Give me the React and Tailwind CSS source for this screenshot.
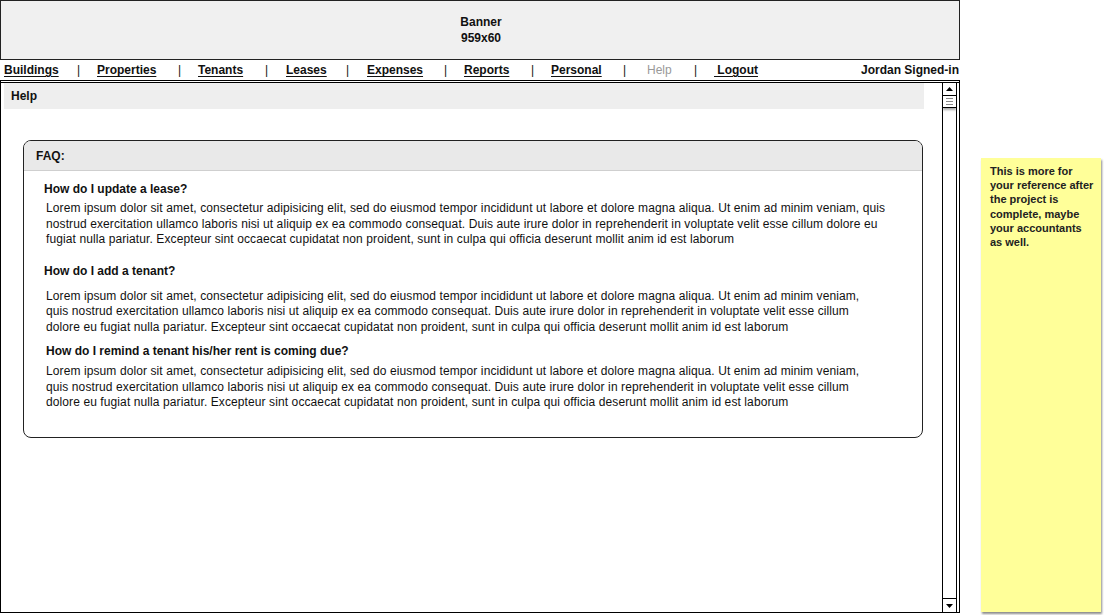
import React from "react";

const LOREM =
  "Lorem ipsum dolor sit amet, consectetur adipisicing elit, sed do eiusmod tempor incididunt ut labore et dolore magna aliqua. Ut enim ad minim veniam, quis nostrud exercitation ullamco laboris nisi ut aliquip ex ea commodo consequat. Duis aute irure dolor in reprehenderit in voluptate velit esse cillum dolore eu fugiat nulla pariatur. Excepteur sint occaecat cupidatat non proident, sunt in culpa qui officia deserunt mollit anim id est laborum";

function NavLink({ w, children, gray }) {
  return (
    <span className={`${w} shrink-0 whitespace-pre ${gray ? "text-[#999999] font-normal" : "font-bold underline underline-offset-2"}`}>
      {children}
    </span>
  );
}

function Sep({ w }) {
  return <span className={`${w} shrink-0 font-normal`}>|</span>;
}

export default function App() {
  return (
    <div
      className="flex w-[1104px] h-[615px] bg-white text-[#111] overflow-hidden"
      style={{ fontFamily: '"Liberation Sans", Arial, sans-serif' }}
    >
      <div className="w-[960px] shrink-0 flex flex-col">
        {/* Banner */}
        <div className="h-[60px] border border-[#222] bg-[#f0f0f0] flex flex-col items-center justify-center text-[12px] leading-[16px] font-bold pl-[2px]">
          <div>Banner</div>
          <div>959x60</div>
        </div>
        {/* Nav */}
        <div className="h-[20px] flex items-center pl-[4px] pr-[1px] text-[12px] leading-[14px]">
          <NavLink w="w-[73px]">Buildings</NavLink>
          <Sep w="w-[20px]" />
          <NavLink w="w-[81px]">Properties</NavLink>
          <Sep w="w-[20px]" />
          <NavLink w="w-[67px]">Tenants</NavLink>
          <Sep w="w-[21px]" />
          <NavLink w="w-[60px]">Leases</NavLink>
          <Sep w="w-[21px]" />
          <NavLink w="w-[77px]">Expenses</NavLink>
          <Sep w="w-[20px]" />
          <NavLink w="w-[67px]">Reports</NavLink>
          <Sep w="w-[20px]" />
          <NavLink w="w-[72px]">Personal</NavLink>
          <Sep w="w-[24px]" />
          <NavLink w="w-[47px]" gray>Help</NavLink>
          <Sep w="w-[20px]" />
          <NavLink w="w-auto">{" Logout"}</NavLink>
          <span className="ml-auto font-bold">Jordan Signed-in</span>
        </div>
        {/* Panel */}
        <div className="h-[533px] border border-black flex flex-col">
          <div className="mt-[1px] border-t border-black flex-1 flex min-h-0">
            <div className="w-[941px] flex flex-col">
              <div className="ml-[3px] w-[920px] h-[26px] bg-[#eeeeee] flex items-center pl-[7px] text-[12px] font-bold">
                Help
              </div>
              <div className="ml-[22px] mt-[31px] w-[900px] h-[298px] border border-[#222] rounded-[8px] overflow-hidden flex flex-col">
                <div className="h-[30px] shrink-0 bg-[#e9e9e9] border-b border-[#cfcfcf] flex items-center pl-[12px] text-[12px] font-bold">
                  FAQ:
                </div>
                <div className="pt-[11px] text-[12px]">
                  <div className="pl-[20px] font-bold leading-[15px]">How do I update a lease?</div>
                  <p className="pl-[22px] mt-[4px] w-[870px] leading-[15.5px] tracking-[0.1px]">{LOREM}</p>
                  <div className="pl-[20px] mt-[16px] font-bold leading-[15px]">How do I add a tenant?</div>
                  <p className="pl-[22px] mt-[10px] w-[842px] leading-[15.5px] tracking-[0.1px]">{LOREM}</p>
                  <div className="pl-[22px] mt-[9px] font-bold leading-[15px]">
                    How do I remind a tenant his/her rent is coming due?
                  </div>
                  <p className="pl-[22px] mt-[5px] w-[842px] leading-[15.5px] tracking-[0.1px]">{LOREM}</p>
                </div>
              </div>
            </div>
            {/* Scrollbar */}
            <div className="w-[15px] border-x border-black flex flex-col">
              <div className="h-[13px] border-b border-black flex items-center justify-center">
                <svg width="7" height="4" viewBox="0 0 7 4">
                  <path d="M3.5 0 L7 4 L0 4 Z" fill="#000" />
                </svg>
              </div>
              <div className="h-[12px] border-b border-black flex flex-col items-center justify-center gap-[2px] shadow-[0_2px_2px_rgba(0,0,0,0.35)]">
                <div className="w-[7px] h-px bg-[#888]" />
                <div className="w-[7px] h-px bg-[#888]" />
                <div className="w-[7px] h-px bg-[#888]" />
              </div>
              <div className="flex-1" />
              <div className="h-[14px] border-t border-black flex items-center justify-center">
                <svg width="7" height="4" viewBox="0 0 7 4">
                  <path d="M0 0 L7 0 L3.5 4 Z" fill="#000" />
                </svg>
              </div>
            </div>
            <div className="w-[2px]" />
          </div>
        </div>
      </div>
      {/* Sticky note */}
      <div className="ml-[21px] mt-[158px] w-[120px] h-[454px] bg-[#ffff99] shadow-[1px_2px_2px_rgba(0,0,0,0.45)] pl-[9px] pt-[6px] text-[11px] font-bold leading-[14.2px] text-[#222] whitespace-nowrap">
        This is more for
        <br />
        your reference after
        <br />
        the project is
        <br />
        complete, maybe
        <br />
        your accountants
        <br />
        as well.
      </div>
    </div>
  );
}
